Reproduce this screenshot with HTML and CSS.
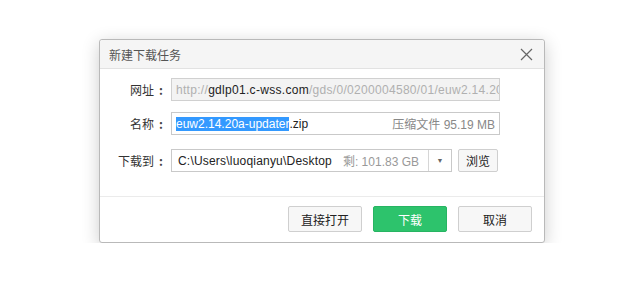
FILE: index.html
```html
<!DOCTYPE html>
<html>
<head>
  <title>新建下载任务</title>
  <link rel="stylesheet" href="styles.css">
</head>
<body>

<div class="dialog">
  <div class="dialog-title">
    <span>新建下载任务</span>
    <svg class="close" width="13" height="13" viewBox="0 0 13 13">
      <path d="M1 1 L12 12 M12 1 L1 12" stroke="#666" stroke-width="1.2" fill="none"/>
    </svg>
  </div>

  <div class="dialog-body">
    <div class="row row-url">
      <label class="field-label">网址<span class="colon">:</span></label>
      <div class="field field-disabled">
        <span class="muted">http://</span><span class="host">gdlp01.c-wss.com</span><span class="muted">/gds/0/0200004580/01/euw2.14.20a-updater.zip</span>
      </div>
    </div>
    <div class="row row-name">
      <label class="field-label">名称<span class="colon">:</span></label>
      <div class="field">
        <span class="selected">euw2.14.20a-updater</span><span>.zip</span>
        <span class="hint">压缩文件 95.19 MB</span>
      </div>
    </div>
    <div class="row row-path">
      <label class="field-label">下载到<span class="colon">:</span></label>
      <div class="field combo">
        <span class="path">C:\Users\luoqianyu\Desktop</span>
        <span class="free">剩: 101.83 GB</span>
        <span class="combo-arrow">&#9660;</span>
      </div>
      <button class="btn btn-small">浏览</button>
    </div>
  </div>

  <div class="dialog-footer">
    <button class="btn">直接打开</button>
    <button class="btn btn-primary">下载</button>
    <button class="btn">取消</button>
  </div>
</div>

</body>
</html>
```

FILE: styles.css
```css
body {
  margin: 0;
  padding: 39px 0 0 99px;
  background-color: #fff;
  font-family: "Liberation Sans", "Noto Sans CJK SC", sans-serif;
  font-size: 12px;
  color: #333;
}

.dialog {
  width: 444px;
  height: 202px;
  border: 1px solid #b9b9b9;
  border-radius: 3px;
  background: #fff;
  box-shadow: 0 4px 18px rgba(0, 0, 0, 0.2);
  display: flex;
  flex-direction: column;
}

.dialog-title {
  height: 28px;
  background: #f5f5f5;
  border-bottom: 1px solid #e2e2e2;
  border-radius: 3px 3px 0 0;
  display: flex;
  align-items: center;
  justify-content: space-between;
  padding: 0 11px 0 9px;
  color: #555;
  font-family: "Noto Sans CJK SC", sans-serif;
}

.close {
  display: block;
}

.dialog-body {
  height: 128px;
  padding-top: 9px;
  box-sizing: border-box;
  border-bottom: 1px solid #ebebeb;
}

.row {
  display: flex;
  align-items: center;
  height: 23px;
}

.row-name {
  margin-top: 11px;
}

.row-path {
  margin-top: 14px;
}

.field-label {
  width: 63px;
  margin-right: 8px;
  text-align: right;
  color: #333;
  font-family: "Noto Sans CJK SC", sans-serif;
}

.colon {
  margin-left: 5px;
  font-weight: bold;
  color: #444;
}

.field {
  width: 329px;
  height: 23px;
  box-sizing: border-box;
  border: 1px solid #c9c9c9;
  background: #fff;
  display: flex;
  align-items: center;
  padding: 0 4px;
  white-space: nowrap;
  overflow: hidden;
  color: #222;
}

.field-disabled {
  background: #f3f3f3;
  border-color: #d0d0d0;
  letter-spacing: 0.3px;
}

.muted {
  color: #b0b0b0;
}

.host {
  color: #222;
}

.selected {
  background: #3399ff;
  color: #fff;
}

.hint {
  margin-left: auto;
  color: #888;
}

.combo {
  width: 281px;
  padding: 0 0 0 6px;
}

.path {
  letter-spacing: 0.2px;
}

.free {
  margin-left: auto;
  margin-right: 9px;
  color: #999;
}

.combo-arrow {
  width: 22px;
  height: 21px;
  border-left: 1px solid #d6d6d6;
  font-size: 7px;
  color: #666;
  display: flex;
  align-items: center;
  justify-content: center;
}

.btn {
  width: 74px;
  height: 26px;
  border: 1px solid #cfcfcf;
  border-radius: 2px;
  background: #f7f7f7;
  color: #222;
  font-family: "Noto Sans CJK SC", sans-serif;
  font-size: 12px;
  padding: 0;
  cursor: pointer;
}

.btn-small {
  width: 40px;
  height: 23px;
  margin-left: 6px;
}

.btn-primary {
  background: #2dc36c;
  border-color: #27b462;
  color: #fff;
}

.dialog-footer {
  flex: 1;
  display: flex;
  justify-content: flex-end;
  align-items: flex-start;
  gap: 11px;
  padding: 9px 12px 0 0;
}
```
